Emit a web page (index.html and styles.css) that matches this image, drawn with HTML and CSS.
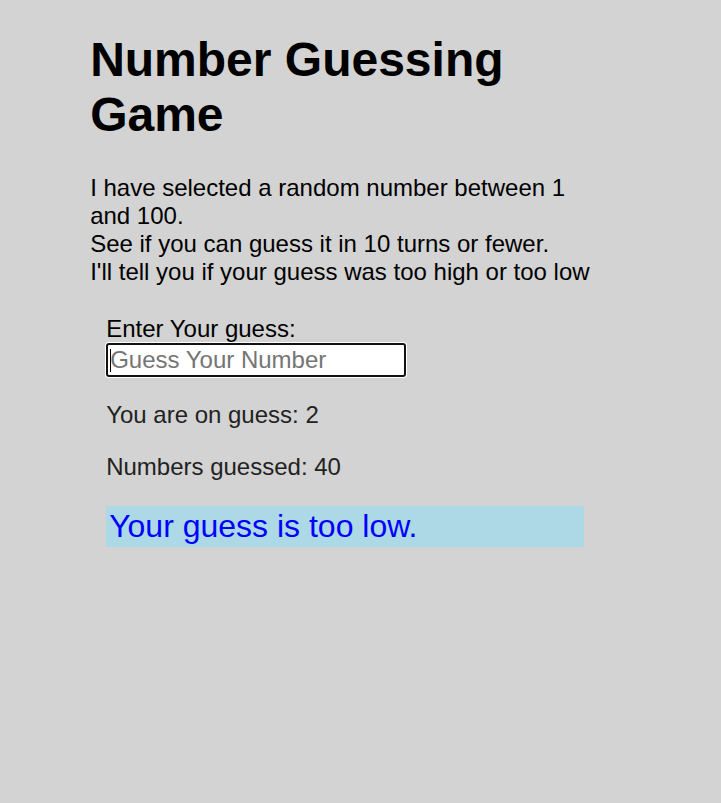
FILE: index.html
```html
<!DOCTYPE html>
<html lang="en">
<head>
<meta charset="utf-8">
<title>Number guessing game</title>
<link rel="stylesheet" href="styles.css">
</head>
<body>
<h1 class="title">Number Guessing Game</h1>
<p class="intro">I have selected a random number between 1 and 100.<br>See if you can guess it in 10 turns or fewer.<br>I'll tell you if your guess was too high or too low</p>
<div class="form">
  <label class="label" for="guessField">Enter Your guess:</label>
  <span class="field-wrap"><input class="guess-field" id="guessField" type="text" placeholder="Guess Your Number"><span class="caret"></span></span>
  <p class="guesses">You are on guess: 2</p>
  <p class="guesses">Numbers guessed: 40</p>
  <p class="last-result">Your guess is too low.</p>
</div>
</body>
</html>
```
FILE: styles.css
```css
html {
  background: #d3d3d3;
}
body {
  width: 75%;
  margin: 0 auto;
  font-family: "Liberation Sans", Arial, sans-serif;
  font-size: 24px;
  color: #000;
}
.title {
  font-size: 48px;
  font-weight: bold;
  margin: 32px 0 32px;
}
.intro {
  max-width: 510px;
  margin: 0 0 24px;
}
.form {
  padding: 5px 15px 0 16px;
}
.label {
  display: block;
}
.field-wrap {
  position: relative;
  display: inline-block;
}
.guess-field {
  box-sizing: border-box;
  width: 300px;
  height: 34px;
  font-family: "Liberation Sans", Arial, sans-serif;
  font-size: 24px;
  padding: 0 2px;
  border: 2px solid #111;
  border-radius: 3px;
  box-shadow: 0 0 0 1px #fff;
  background: #fff;
  outline: none;
  margin: 0;
  vertical-align: top;
}
.guess-field::placeholder {
  color: #757575;
}
.caret {
  position: absolute;
  left: 4px;
  top: 6px;
  width: 1px;
  height: 23px;
  background: #000;
}
.guesses {
  color: #222;
  margin: 24px 0;
}
.last-result {
  box-sizing: border-box;
  width: 478px;
  margin: 25px 0 0;
  padding: 2px 3px;
  font-size: 32px;
  line-height: 37px;
  color: #0000ff;
  background: #add8e6;
}
```
